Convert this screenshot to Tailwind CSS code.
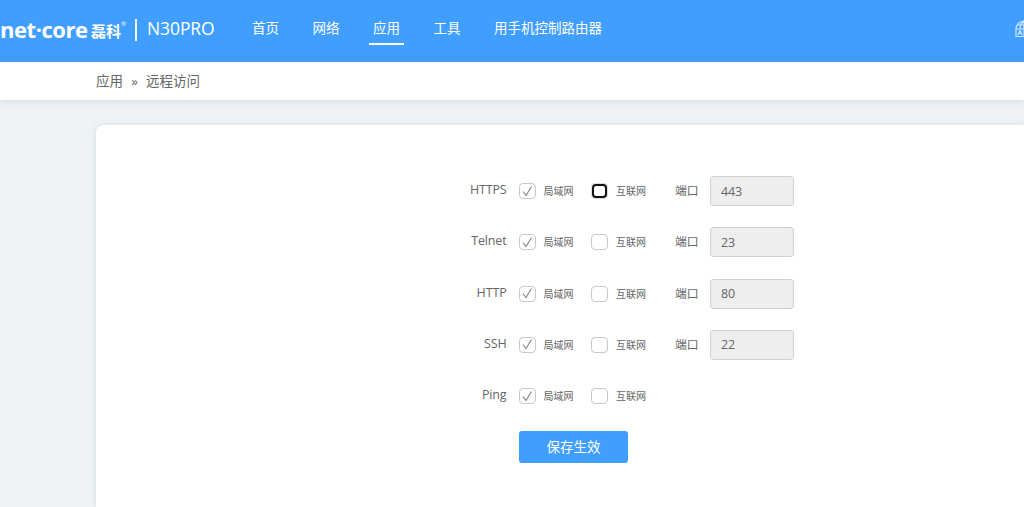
<!DOCTYPE html>
<html lang="zh-CN">
<head>
    <meta charset="UTF-8">
    <meta name="viewport" content="width=device-width, initial-scale=1.0">
    <title>远程访问</title>
    <script src="https://cdn.jsdelivr.net/npm/@tailwindcss/browser@4"></script>
</head>
<body class="h-screen overflow-hidden flex flex-col bg-[#eff3f6] text-[#666] font-['Open_Sans','Noto_Sans_CJK_SC',sans-serif]">

    <!-- Header -->
    <header class="h-[62px] shrink-0 flex bg-[#409eff] text-white whitespace-nowrap">
        <div class="w-[252px] shrink-0 flex items-center">
            <span class="w-[91px] text-[22px] leading-none font-bold tracking-[-0.45px] -mt-[4px]">net·core</span>
            <span class="w-[30px] text-[15px] leading-none font-bold">磊科</span>
            <span class="w-[14px] text-[6px] leading-none -mt-[14px]">®</span>
            <span class="w-[2px] h-[22px] bg-white/90 -mt-[3px]"></span>
            <span class="ml-[10px] text-[17.5px] leading-none tracking-[-0.1px] -mt-[4px]">N30PRO</span>
        </div>
        <nav class="flex gap-[33.5px] text-[13.5px] leading-5 pt-[18px]">
            <a>首页</a>
            <a>网络</a>
            <a class="h-[27px] -mx-1 px-1 border-b-2 border-white">应用</a>
            <a>工具</a>
            <a>用手机控制路由器</a>
        </nav>
        <!-- Language -->
        <svg class="ml-auto mt-[20px] -mr-[9px] shrink-0 opacity-75" width="18" height="18" viewBox="0 0 18 18" fill="none" stroke="#fff" stroke-width="1.2">
            <path d="M1 9A8 8 0 0 1 17 9M9 1C5.500 3 5 6 5 9M9 1V9M9 1C12.500 3 13 6 13 9M2.500 5H15.500M1 9V16.500H9V9Z"/>
            <path d="M3 15L5 10.500L7 15M3.700 13.500H6.300M9 16.500H17V9"/>
        </svg>
    </header>

    <!-- Breadcrumb -->
    <div class="h-[38px] shrink-0 flex items-center pl-[96px] bg-white text-[13.5px] shadow-[0_1px_8px_rgba(100,125,150,0.22)]">
        <span>应用</span>
        <span class="w-[23px] text-center">»</span>
        <span>远程访问</span>
    </div>

    <main class="flex-1 mt-[25px] ml-[95.5px] pt-[51px] bg-white rounded-tl-lg shadow-[0_0_6px_rgba(100,125,150,0.2)]">
        <form id="accessForm" class="flex flex-col gap-[21.25px]"></form>
        <button type="button" class="block w-[109px] h-[32px] mt-[20px] ml-[423.5px] rounded-[3px] bg-[#409eff] text-white text-[13.5px]">保存生效</button>
    </main>

    <script>
        const services = [
            { name: "HTTPS", port: "443", focused: true },
            { name: "Telnet", port: "23" },
            { name: "HTTP", port: "80" },
            { name: "SSH", port: "22" },
            { name: "Ping" }
        ];
        document.getElementById("accessForm").innerHTML = services.map(s => `
            <div class="h-[30px] flex items-center">
                <span class="w-[411px] -mt-px text-right text-[12.5px] tracking-[-0.15px]">${s.name}</span>
                <span class="w-[17px] h-4 ml-[12.5px] flex items-center justify-center border border-[#c8c8c8] rounded-[4px]">
                    <svg width="11" height="11" viewBox="0 0 11 11" fill="none" stroke="#888" stroke-width="1.2"><path d="M1 5.500L4 9.500L9.500 0.500"/></svg>
                </span>
                <span class="w-[55px] pl-[7.5px] pt-px text-[10px]">局域网</span>
                ${s.focused
                    ? `<span class="w-[17px] h-4 p-px bg-[#ddd] rounded-[4px]"><span class="block h-full border-2 border-[#111] rounded-[4px] bg-white"></span></span>`
                    : `<span class="w-[17px] h-4 border border-[#c8c8c8] rounded-[4px]"></span>`}
                <span class="w-[67px] pl-[8px] pt-px text-[10px]">互联网</span>
                ${s.port ? `
                <span class="w-[35px] text-[11.800px]">端口</span>
                <input type="text" value="${s.port}" disabled
                    class="w-[84px] h-[30px] pl-[10px] border border-[#d2d2d2] rounded-[3px] bg-[#eee] text-[12.5px] tracking-[-0.15px] text-[#666]">` : ""}
            </div>
        `).join("");
    </script>

</body>
</html>
